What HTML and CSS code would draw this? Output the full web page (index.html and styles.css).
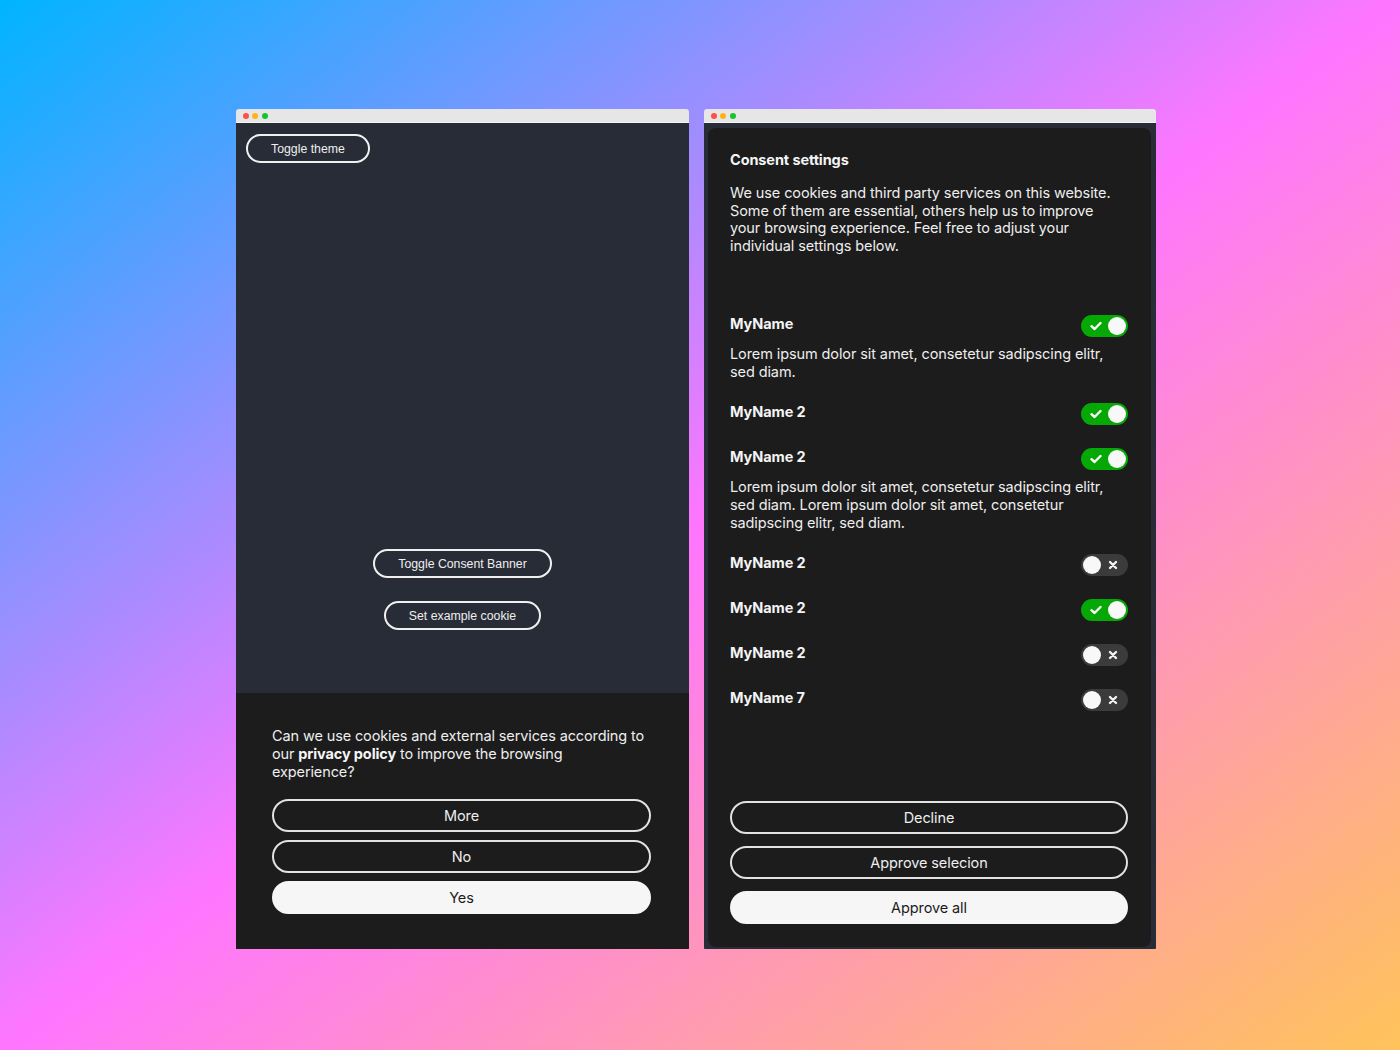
FILE: index.html
```html
<!DOCTYPE html>
<html lang="en">
<head>
<meta charset="utf-8">
<title>Consent UI</title>
<link rel="stylesheet" href="styles.css">
</head>
<body>
<div class="stage">
  <section class="window window-left">
    <div class="titlebar"><span class="dot red"></span><span class="dot yellow"></span><span class="dot green"></span></div>
    <div class="content">
      <div class="demo">
        <button class="small-btn">Toggle theme</button>
        <div class="demo-actions">
          <button class="small-btn">Toggle Consent Banner</button>
          <button class="small-btn">Set example cookie</button>
        </div>
      </div>
      <div class="banner">
        <p class="banner-text">Can we use cookies and external services according to our <strong>privacy policy</strong> to improve the browsing experience?</p>
        <div class="actions">
          <button class="btn">More</button>
          <button class="btn">No</button>
          <button class="btn btn-primary">Yes</button>
        </div>
      </div>
    </div>
  </section>

  <section class="window window-right">
    <div class="titlebar"><span class="dot red"></span><span class="dot yellow"></span><span class="dot green"></span></div>
    <div class="content content-right">
      <div class="panel">
        <h2 class="panel-title">Consent settings</h2>
        <p class="panel-intro">We use cookies and third party services on this website. Some of them are essential, others help us to improve your browsing experience. Feel free to adjust your individual settings below.</p>
        <ul class="services">
          <li class="service">
            <div class="service-head"><span class="service-name">MyName</span>
              <span class="switch on"><svg class="ico" width="12" height="10" viewBox="0 0 12 10"><path d="M1.5 5.2 L4.6 8 L10.5 2" fill="none" stroke="#fff" stroke-width="2.4" stroke-linecap="round" stroke-linejoin="round"/></svg><span class="knob"></span></span></div>
            <p class="service-desc">Lorem ipsum dolor sit amet, consetetur sadipscing elitr, sed diam.</p>
          </li>
          <li class="service">
            <div class="service-head"><span class="service-name">MyName 2</span>
              <span class="switch on"><svg class="ico" width="12" height="10" viewBox="0 0 12 10"><path d="M1.5 5.2 L4.6 8 L10.5 2" fill="none" stroke="#fff" stroke-width="2.4" stroke-linecap="round" stroke-linejoin="round"/></svg><span class="knob"></span></span></div>
          </li>
          <li class="service">
            <div class="service-head"><span class="service-name">MyName 2</span>
              <span class="switch on"><svg class="ico" width="12" height="10" viewBox="0 0 12 10"><path d="M1.5 5.2 L4.6 8 L10.5 2" fill="none" stroke="#fff" stroke-width="2.4" stroke-linecap="round" stroke-linejoin="round"/></svg><span class="knob"></span></span></div>
            <p class="service-desc">Lorem ipsum dolor sit amet, consetetur sadipscing elitr, sed diam. Lorem ipsum dolor sit amet, consetetur sadipscing elitr, sed diam.</p>
          </li>
          <li class="service">
            <div class="service-head"><span class="service-name">MyName 2</span>
              <span class="switch off"><span class="knob"></span><svg class="ico" width="10" height="10" viewBox="0 0 10 10"><path d="M2 2 L8 8 M8 2 L2 8" fill="none" stroke="#f2f2f2" stroke-width="2.4" stroke-linecap="round"/></svg></span></div>
          </li>
          <li class="service">
            <div class="service-head"><span class="service-name">MyName 2</span>
              <span class="switch on"><svg class="ico" width="12" height="10" viewBox="0 0 12 10"><path d="M1.5 5.2 L4.6 8 L10.5 2" fill="none" stroke="#fff" stroke-width="2.4" stroke-linecap="round" stroke-linejoin="round"/></svg><span class="knob"></span></span></div>
          </li>
          <li class="service">
            <div class="service-head"><span class="service-name">MyName 2</span>
              <span class="switch off"><span class="knob"></span><svg class="ico" width="10" height="10" viewBox="0 0 10 10"><path d="M2 2 L8 8 M8 2 L2 8" fill="none" stroke="#f2f2f2" stroke-width="2.4" stroke-linecap="round"/></svg></span></div>
          </li>
          <li class="service">
            <div class="service-head"><span class="service-name">MyName 7</span>
              <span class="switch off"><span class="knob"></span><svg class="ico" width="10" height="10" viewBox="0 0 10 10"><path d="M2 2 L8 8 M8 2 L2 8" fill="none" stroke="#f2f2f2" stroke-width="2.4" stroke-linecap="round"/></svg></span></div>
          </li>
        </ul>
        <div class="actions actions-right">
          <button class="btn">Decline</button>
          <button class="btn">Approve selecion</button>
          <button class="btn btn-primary">Approve all</button>
        </div>
      </div>
    </div>
  </section>
</div>
</body>
</html>
```

FILE: styles.css
```css
* { box-sizing: border-box; }
html, body { margin: 0; padding: 0; }
body {
  width: 1400px;
  height: 1050px;
  overflow: hidden;
  background: linear-gradient(to bottom right, #00b4ff 0%, #ff76ff 50%, #ffc35a 100%);
  font-family: Inter, "Noto Sans", sans-serif;
}
.stage {
  display: flex;
  gap: 15px;
  padding: 109px 0 0 236px;
}
.window {
  height: 840px;
  display: flex;
  flex-direction: column;
  border-radius: 3px 3px 1px 1px;
  overflow: hidden;
}
.window-left { width: 453px; }
.window-right { width: 452px; }
.titlebar {
  height: 14px;
  flex: none;
  background: #e6e6e6;
  border-bottom: 1px solid #f4f4f4;
  display: flex;
  align-items: center;
  gap: 3.4px;
  padding-left: 7px;
}
.dot { width: 6px; height: 6px; border-radius: 50%; }
.red { background: #ff4f4a; }
.yellow { background: #ffb21a; }
.green { background: #16c42c; }
.content {
  flex: 1;
  display: flex;
  flex-direction: column;
  background: #282c37;
}
.demo {
  flex: 1;
  display: flex;
  flex-direction: column;
  align-items: flex-start;
  padding: 11px 10px;
}
.small-btn {
  height: 29px;
  padding: 0 23px;
  border: 2px solid #f0f0f0;
  border-radius: 15px;
  background: transparent;
  color: #eeeeee;
  font-family: "Liberation Sans", Arial, sans-serif;
  font-size: 12.3px;
  cursor: pointer;
}
.demo-actions {
  margin-top: auto;
  margin-bottom: 52px;
  align-self: stretch;
  display: flex;
  flex-direction: column;
  align-items: center;
  gap: 23px;
}
.banner {
  height: 256px;
  flex: none;
  background: #1c1c1c;
  padding: 34px 38px 0 36px;
}
.banner-text {
  margin: 0;
  max-width: 373px;
  color: #eeeeee;
  font-size: 14.5px;
  letter-spacing: -0.12px;
  line-height: 18px;
}
.banner-text strong { font-weight: 700; color: #f6f6f6; }
.actions {
  margin-top: 18px;
  display: flex;
  flex-direction: column;
  gap: 8px;
}
.btn {
  height: 33px;
  width: 100%;
  border: 2px solid #e2e2e2;
  border-radius: 17px;
  background: #1c1c1c;
  color: #eeeeee;
  font-family: Inter, "Noto Sans", sans-serif;
  font-size: 14.5px;
  letter-spacing: -0.1px;
  cursor: pointer;
}
.btn-primary {
  background: #f6f6f6;
  border-color: #f6f6f6;
  color: #1c1c1c;
}
.content-right { padding: 5px 5px 2px 4px; }
.panel {
  flex: 1;
  background: #1c1c1c;
  border-radius: 8px;
  padding: 23px 23px 23px 22px;
  display: flex;
  flex-direction: column;
  color: #eeeeee;
  letter-spacing: -0.1px;
}
.panel-title {
  margin: 0;
  font-size: 14.5px;
  line-height: 18px;
  font-weight: 700;
  color: #f4f4f4;
}
.panel-intro {
  margin: 15px 0 0;
  max-width: 392px;
  font-size: 14.5px;
  line-height: 17.67px;
}
.services {
  list-style: none;
  margin: 60px 0 0;
  padding: 0;
  display: flex;
  flex-direction: column;
  gap: 23px;
}
.service-head {
  display: flex;
  justify-content: space-between;
  align-items: flex-start;
  height: 22px;
}
.service-name {
  font-weight: 700;
  font-size: 14.5px;
  line-height: 18px;
  color: #f4f4f4;
}
.service-desc {
  margin: 8px 0 -1px;
  max-width: 392px;
  font-size: 14.5px;
  line-height: 18px;
}
.switch {
  width: 47px;
  height: 22px;
  border-radius: 11px;
  display: flex;
  align-items: center;
  justify-content: space-between;
  padding: 0 2px;
}
.switch.on { background: #05a805; padding-left: 9px; }
.switch.off { background: #3b3b3b; padding-right: 10px; }
.knob {
  width: 18px;
  height: 18px;
  border-radius: 50%;
  background: #f8f8f8;
}
.ico { display: block; }
.actions-right {
  margin-top: auto;
  gap: 12px;
}
```
